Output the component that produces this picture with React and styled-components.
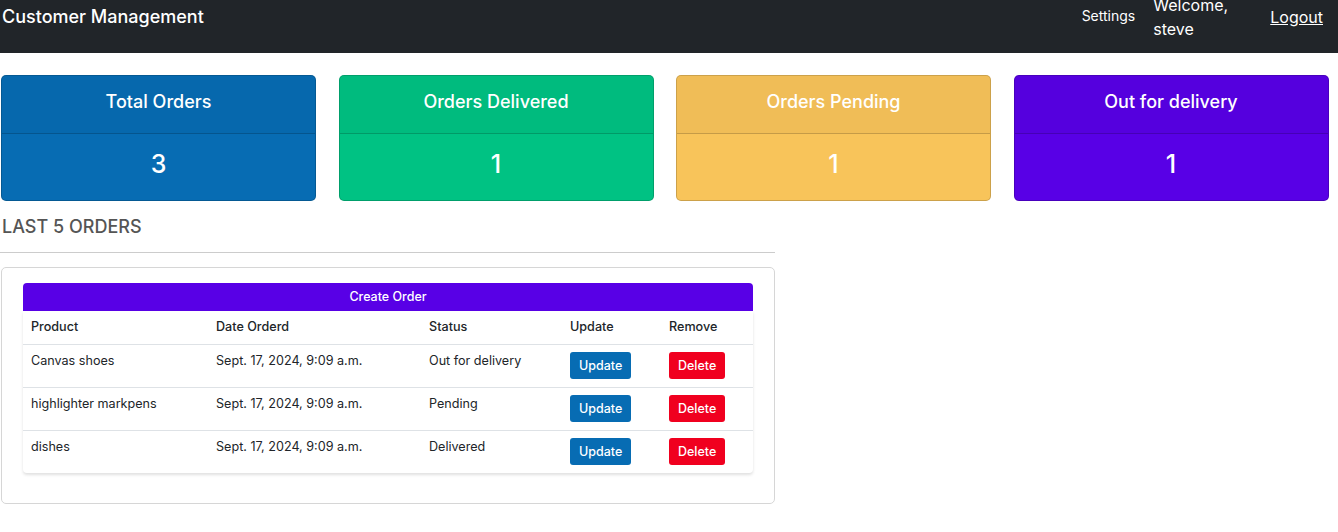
// Packages
import React from "react"
import styled, { createGlobalStyle } from "styled-components"

// Styles
const GlobalStyle = createGlobalStyle`
    body {
        margin: 0;
        font-family: Inter, "Noto Sans", sans-serif;
        color: #212529;
        background: #fff;
    }
`

const Nav = styled.nav`
    height: 53px;
    background: #212529;
    display: flex;
    align-items: flex-start;
    justify-content: space-between;
    padding: 0 15px 0 2px;
    box-sizing: border-box;
    overflow: hidden;
`

const Brand = styled.span`
    color: #fff;
    font-size: 18px;
    font-weight: 500;
    line-height: 34px;
`

const NavLinks = styled.div`
    display: flex;
    align-items: flex-start;
    gap: 18px;
    margin-top: -7px;
`

const NavItem = styled.span`
    color: #fff;
    font-size: ${(p) => (p.small ? "14px" : "16px")};
    line-height: 24px;
    width: ${(p) => p.width || "auto"};
    text-decoration: ${(p) => (p.underline ? "underline" : "none")};
    margin-left: ${(p) => p.gapLeft || "0"};
    padding-top: ${(p) => p.top || "0"};
`

const Stats = styled.div`
    display: grid;
    grid-template-columns: repeat(4, 315px);
    column-gap: 22.5px;
    padding: 22px 0 0 1px;
`

const StatCard = styled.div`
    background: ${(p) => p.bg};
    border: 1px solid rgba(0, 0, 0, 0.175);
    border-radius: 5px;
    color: #fff;
    text-align: center;
    overflow: hidden;
`

const StatHeader = styled.div`
    height: 57px;
    line-height: 52px;
    font-size: 18px;
    font-weight: 500;
    background: rgba(0, 0, 0, 0.03);
    border-bottom: 1px solid rgba(0, 0, 0, 0.175);
`

const StatValue = styled.div`
    height: 66px;
    line-height: 61px;
    font-size: 25px;
    font-weight: 500;
`

const Section = styled.section`
    width: 775px;
    padding-top: 12px;
`

const SectionTitle = styled.h5`
    margin: 0 0 0 2px;
    font-size: 18px;
    font-weight: 500;
    color: #555;
    line-height: 28px;
`

const Rule = styled.hr`
    margin: 11px 0 14px;
    border: 0;
    border-top: 1px solid #ccc;
`

const Panel = styled.div`
    margin-left: 1px;
    border: 1px solid #d6d6d6;
    border-radius: 5px;
    padding: 15px 21px 30px;
`

const CreateButton = styled.div`
    height: 28px;
    line-height: 27px;
    background: #5800e6;
    color: #fff;
    font-size: 12.5px;
    font-weight: 500;
    text-align: center;
    border-radius: 4px 4px 0 0;
`

const Table = styled.table`
    width: 100%;
    border-collapse: collapse;
    font-size: 12.6px;
    box-shadow: 0 2px 3px rgba(0, 0, 0, 0.12);
    border-radius: 0 0 4px 4px;
`

const Th = styled.th`
    text-align: left;
    vertical-align: top;
    font-weight: 500;
    padding: 8px 8px 9px;
    line-height: 16px;
    border-bottom: 1px solid #dee2e6;
    width: ${(p) => p.width || "auto"};
`

const Td = styled.td`
    padding: 8px;
    vertical-align: top;
    border-bottom: ${(p) => (p.last ? "none" : "1px solid #dee2e6")};
    line-height: 16px;
`

const ActionButton = styled.span`
    display: block;
    width: fit-content;
    height: 27px;
    line-height: 27px;
    padding: 0 9px;
    border-radius: 3px;
    color: #fff;
    font-size: 12.5px;
    font-weight: 500;
    background: ${(p) => (p.danger ? "#f0001f" : "#076cb3")};
    margin-top: -1px;
`

const stats = [
    { title: "Total Orders", value: 3, bg: "#076cb3" },
    { title: "Orders Delivered", value: 1, bg: "#00c283" },
    { title: "Orders Pending", value: 1, bg: "#f8c45a" },
    { title: "Out for delivery", value: 1, bg: "#5800e6" },
]

const orders = [
    { product: "Canvas shoes", status: "Out for delivery" },
    { product: "highlighter markpens", status: "Pending" },
    { product: "dishes", status: "Delivered" },
]

function App() {
    return (
        <>
            <GlobalStyle />

            <Nav>
                <Brand>Customer Management</Brand>

                <NavLinks>
                    <NavItem small top="11px">
                        Settings
                    </NavItem>
                    <NavItem width="82px">Welcome, steve</NavItem>
                    <NavItem underline gapLeft="17px" top="12px">
                        Logout
                    </NavItem>
                </NavLinks>
            </Nav>

            <Stats>
                {stats.map((s) => (
                    <StatCard key={s.title} bg={s.bg}>
                        <StatHeader>{s.title}</StatHeader>
                        <StatValue>{s.value}</StatValue>
                    </StatCard>
                ))}
            </Stats>

            <Section>
                <SectionTitle>LAST 5 ORDERS</SectionTitle>
                <Rule />

                <Panel>
                    <CreateButton>Create Order</CreateButton>
                    <Table>
                        <thead>
                            <tr>
                                <Th width="169px">Product</Th>
                                <Th width="197px">Date Orderd</Th>
                                <Th width="125px">Status</Th>
                                <Th width="83px">Update</Th>
                                <Th>Remove</Th>
                            </tr>
                        </thead>
                        <tbody>
                            {orders.map((o, i) => {
                                const last = i === orders.length - 1
                                return (
                                    <tr key={o.product}>
                                        <Td last={last}>{o.product}</Td>
                                        <Td last={last}>Sept. 17, 2024, 9:09 a.m.</Td>
                                        <Td last={last}>{o.status}</Td>
                                        <Td last={last}>
                                            <ActionButton>Update</ActionButton>
                                        </Td>
                                        <Td last={last}>
                                            <ActionButton danger>Delete</ActionButton>
                                        </Td>
                                    </tr>
                                )
                            })}
                        </tbody>
                    </Table>
                </Panel>
            </Section>
        </>
    )
}

export default App
